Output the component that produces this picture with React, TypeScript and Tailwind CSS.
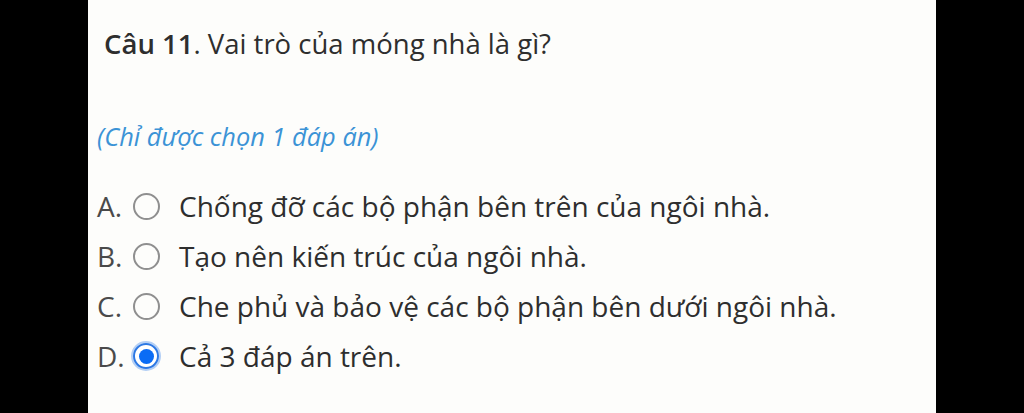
import React from "react";

const options = [
  { k: "A.", t: "Chống đỡ các bộ phận bên trên của ngôi nhà.", c: false },
  { k: "B.", t: "Tạo nên kiến trúc của ngôi nhà.", c: false },
  { k: "C.", t: "Che phủ và bảo vệ các bộ phận bên dưới ngôi nhà.", c: false },
  { k: "D.", t: "Cả 3 đáp án trên.", c: true },
];

export default function App() {
  return (
    <div className="w-[1024px] h-[413px] bg-black flex" style={{ fontFamily: '"Open Sans", sans-serif' }}>
      <div className="ml-[88px] w-[848px] h-full bg-[#fdfdfb] flex flex-col">
        <div className="pl-[16px] pt-[26px] h-[36px] box-content flex items-center text-[27.5px] text-[#2e2e2e] leading-none">
          <span className="font-semibold">Câu 11</span>
          <span>. Vai trò của móng nhà là gì?</span>
        </div>
        <div className="pl-[9px] mt-[60px] h-[30px] flex items-center text-[25.4px] italic text-[#3b93d6] leading-none">
          (Chỉ được chọn 1 đáp án)
        </div>
        <div className="mt-[29px] flex flex-col">
          {options.map((o) => (
            <div key={o.k} className="h-[50px] flex items-center pl-[9px] text-[28px] text-[#2e2e2e] leading-none">
              <span className="w-[34px] text-[#4a4a4a]">{o.k}</span>
              <span className="w-[30px] h-[30px] flex items-center justify-center">
                {o.c ? (
                  <span className="w-[30px] h-[30px] rounded-full border-[2px] border-[#b3cff5] flex items-center justify-center">
                    <span className="w-[26px] h-[26px] rounded-full border-[2.5px] border-[#2c78e4] bg-white flex items-center justify-center">
                      <span className="w-[15px] h-[15px] rounded-full bg-[#0a6cf5]" />
                    </span>
                  </span>
                ) : (
                  <span className="w-[27px] h-[27px] rounded-full border-[2px] border-[#8f8f8f]" />
                )}
              </span>
              <span className="ml-[18px]">{o.t}</span>
            </div>
          ))}
        </div>
      </div>
    </div>
  );
}
